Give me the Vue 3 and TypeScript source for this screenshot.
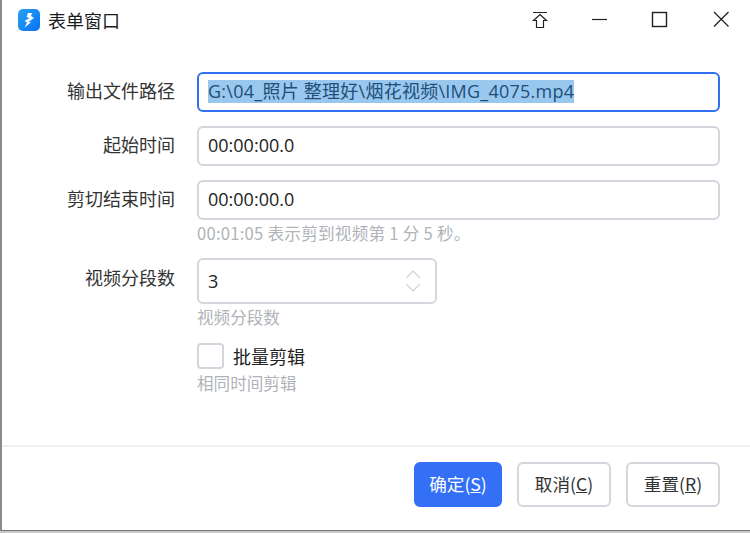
<script setup lang="ts">
const stepUp = 'M1 7 L7 1 L13 7'
const stepDown = 'M1 1 L7 7 L13 1'
</script>

<template>
  <div class="win">
    <header class="title">
      <svg class="logo" width="22" height="22" viewBox="0 0 22 22">
        <defs>
          <linearGradient id="lg" x1="0" y1="0" x2="1" y2="1">
            <stop offset="0" stop-color="#27a4f8" />
            <stop offset="1" stop-color="#0a6ff5" />
          </linearGradient>
        </defs>
        <rect width="22" height="22" rx="5" fill="url(#lg)" />
        <path d="M10 4 H14 L13 7 L16 9 L10.5 13 L13 13.5 L6.5 18.5 L9 13.5 L6.5 12 L11.5 9 L8.5 8 Z" fill="#fff" />
      </svg>
      <span class="title-text">表单窗口</span>
      <div class="controls">
        <svg class="ctl" width="46" height="30" viewBox="0 0 46 30">
          <path d="M15 12.5 H29" stroke="#222" stroke-width="1" fill="none" />
          <path d="M22 14.5 L28.5 20.5 H25.5 V27.5 H18.5 V20.5 H15.5 Z" stroke="#222" stroke-width="1.2" fill="none" />
        </svg>
        <svg class="ctl" width="46" height="30" viewBox="0 0 46 30">
          <path d="M14 19.5 H29" stroke="#222" stroke-width="1.2" fill="none" />
        </svg>
        <svg class="ctl" width="46" height="30" viewBox="0 0 46 30">
          <rect x="14.5" y="12.5" width="14" height="14" stroke="#222" stroke-width="1.4" fill="none" />
        </svg>
        <svg class="ctl" width="46" height="30" viewBox="0 0 46 30">
          <path d="M16 12 L30.5 26.5 M30.5 12 L16 26.5" stroke="#222" stroke-width="1.3" fill="none" />
        </svg>
      </div>
    </header>

    <main class="form">
      <div class="row">
        <label class="lbl">输出文件路径</label>
        <div class="input focus"><span class="sel">G:\04_照片 整理好\烟花视频\IMG_4075.mp4</span></div>
      </div>
      <div class="row">
        <label class="lbl">起始时间</label>
        <div class="input">00:00:00.0</div>
      </div>
      <div class="row tight">
        <label class="lbl">剪切结束时间</label>
        <div class="input">00:00:00.0</div>
      </div>
      <div class="hint first">00:01:05 表示剪到视频第 1 分 5 秒。</div>
      <div class="row tight num">
        <label class="lbl">视频分段数</label>
        <div class="input number">
          <span class="numval">3</span>
          <span class="stepper">
            <svg width="18" height="9" viewBox="0 0 14 8"><path :d="stepUp" stroke="#c9cdd4" fill="none" /></svg>
            <svg width="18" height="9" viewBox="0 0 14 8"><path :d="stepDown" stroke="#c9cdd4" fill="none" /></svg>
          </span>
        </div>
      </div>
      <div class="hint second">视频分段数</div>
      <div class="check">
        <span class="box"></span>
        <span class="check-label">批量剪辑</span>
      </div>
      <div class="hint third">相同时间剪辑</div>
    </main>

    <footer class="foot">
      <button class="btn primary">确定(<u>S</u>)</button>
      <button class="btn">取消(<u>C</u>)</button>
      <button class="btn">重置(<u>R</u>)</button>
    </footer>
  </div>
</template>

<style>
html, body { margin: 0; background: #c8c8c8; }
</style>

<style scoped>
.win {
  width: 750px;
  height: 531px;
  box-sizing: border-box;
  background: #fff;
  border-left: 2px solid #8a8a8a;
  border-bottom: 1px solid #777;
  display: flex;
  flex-direction: column;
  font-family: "Noto Sans CJK SC", "Open Sans", sans-serif;
  color: #222;
  overflow: hidden;
}
.title {
  height: 40px;
  flex: none;
  display: flex;
  align-items: center;
  padding-left: 16px;
}
.logo { flex: none; }
.title-text { margin-left: 8px; font-size: 18px; color: #1c1c1c; line-height: 24px; }
.controls { margin-left: auto; display: flex; align-items: flex-start; align-self: flex-start; padding-right: 6px; }
.ctl { display: block; margin-left: 14px; }
.form { flex: 1; display: flex; flex-direction: column; padding-top: 32px; }
.row { display: flex; align-items: flex-start; margin-bottom: 14px; }
.row.tight { margin-bottom: 0; }
.lbl { width: 173px; text-align: right; font-size: 18px; line-height: 36px; color: #333; flex: none; }
.num .lbl { line-height: 38px; }
.input {
  margin-left: 22px;
  width: 523px;
  height: 40px;
  box-sizing: border-box;
  border: 2px solid #d3d6dc;
  border-radius: 6px;
  padding: 0 9px 3px;
  display: flex;
  align-items: center;
  font-family: "Open Sans", "Noto Sans CJK SC", sans-serif;
  font-size: 18px;
  color: #222;
}
.focus { border-color: #3370f0; padding-bottom: 1px; }
.sel { background: #99c8ee; color: #1f4e79; line-height: 23px; font-size: 18px; letter-spacing: 0.25px; white-space: nowrap; }
.number { width: 240px; height: 46px; justify-content: space-between; padding: 0 13px 1px 9px; }
.numval { font-size: 18px; }
.stepper { display: flex; flex-direction: column; gap: 4px; }
.stepper svg { display: block; }
.hint { margin-left: 195px; font-size: 16.6px; color: #b0b3b8; line-height: 24px; }
.hint.first { margin-top: 1px; margin-bottom: 13px; letter-spacing: 0.25px; }
.hint.second { margin-top: 1px; margin-bottom: 13px; }
.hint.third { margin-top: 1px; }
.check { margin-left: 195px; display: flex; align-items: center; height: 28px; }
.box { width: 27px; height: 26px; box-sizing: border-box; border: 2px solid #d3d6dc; border-radius: 4px; }
.check-label { margin-left: 9px; font-size: 18px; color: #222; line-height: 26px; }
.foot {
  flex: none;
  height: 85px;
  box-sizing: border-box;
  border-top: 2px solid #f0f0f0;
  display: flex;
  justify-content: flex-end;
  padding: 15px 30px 0 0;
  gap: 15px;
}
.btn {
  width: 94px;
  height: 45px;
  box-sizing: border-box;
  background: #fff;
  border: 2px solid #d3d6dc;
  border-radius: 6px;
  font-family: "Noto Sans CJK SC", sans-serif;
  font-size: 17.6px;
  color: #333;
  padding: 0 0 2px;
}
.btn.primary { width: 88px; background: #3370f5; border-color: #3370f5; color: #fff; }
</style>
